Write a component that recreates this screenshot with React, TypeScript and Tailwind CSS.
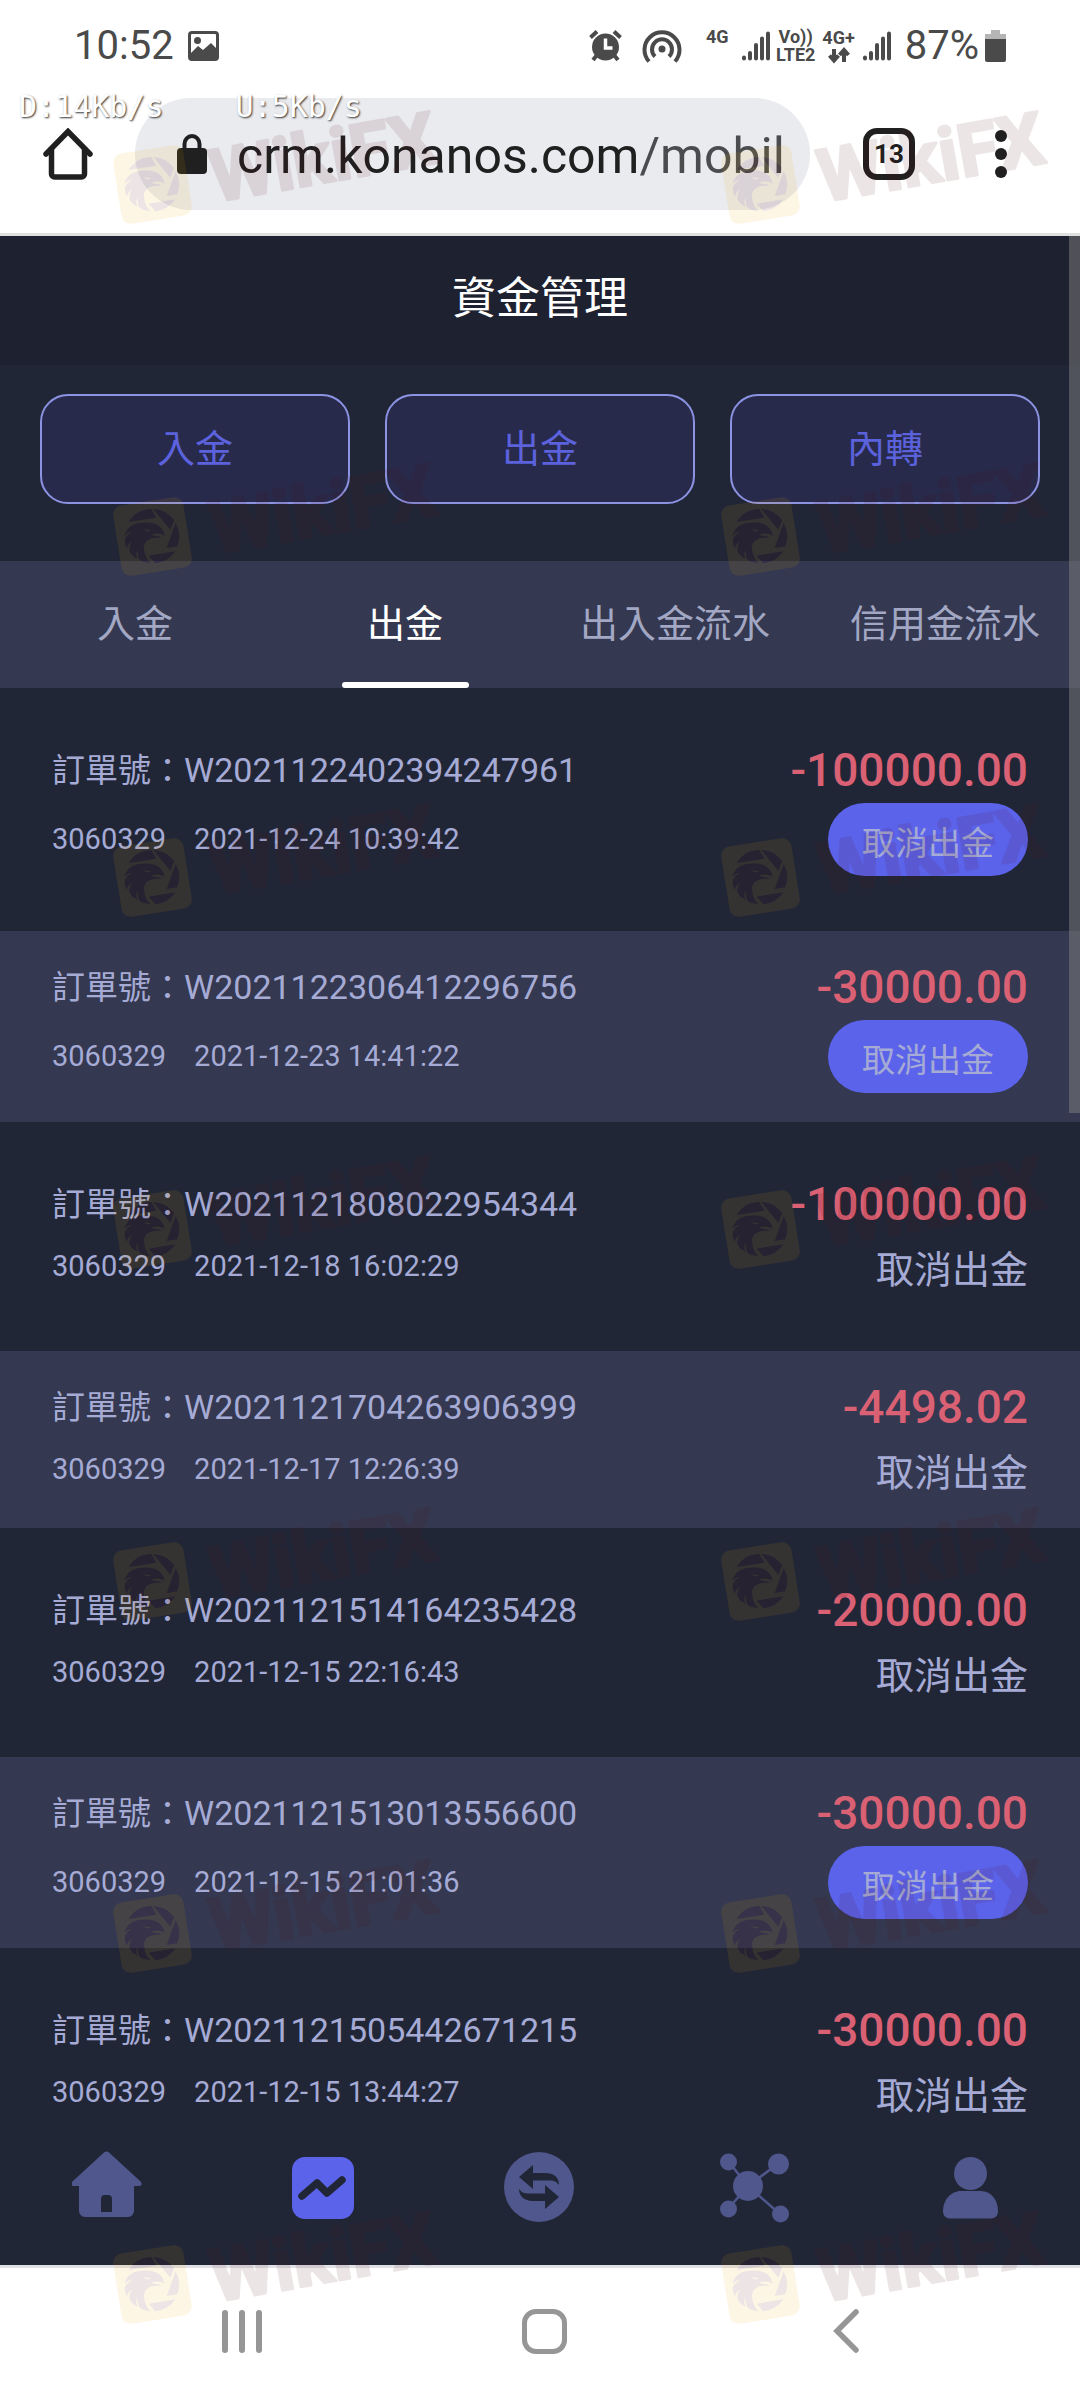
import React, { useState } from 'react';
import clsx from 'clsx';

interface Order {
  id: string;
  time: string;
  amount: string;
  cancelable: boolean;
}

const orders: Order[] = [
  { id: 'W2021122402394247961', time: '2021-12-24 10:39:42', amount: '-100000.00', cancelable: true },
  { id: 'W2021122306412296756', time: '2021-12-23 14:41:22', amount: '-30000.00', cancelable: true },
  { id: 'W2021121808022954344', time: '2021-12-18 16:02:29', amount: '-100000.00', cancelable: false },
  { id: 'W2021121704263906399', time: '2021-12-17 12:26:39', amount: '-4498.02', cancelable: false },
  { id: 'W2021121514164235428', time: '2021-12-15 22:16:43', amount: '-20000.00', cancelable: false },
  { id: 'W2021121513013556600', time: '2021-12-15 21:01:36', amount: '-30000.00', cancelable: true },
  { id: 'W2021121505442671215', time: '2021-12-15 13:44:27', amount: '-30000.00', cancelable: false },
];

const account = '3060329';
const actions = ['入金', '出金', '內轉'];
const tabs = ['入金', '出金', '出入金流水', '信用金流水'];

const SignalBars = ({ className }: { className?: string }) => (
  <svg viewBox="0 0 28 30" className={clsx('w-7 h-[30px]', className)} stroke="#4a4a4a" strokeWidth="4" strokeLinecap="round">
    <path d="M2 26.5v1M8 22v5.500M14 14v13.500M20 7.500v20M26 2.500v25" />
  </svg>
);

const StatusBar = () => (
  <div className="flex items-center h-[92px] px-[74px] text-[40px] leading-none text-[#4a4a4a]">
    <span>10:52</span>
    <svg viewBox="0 0 31 30" className="w-[31px] h-[30px] ml-[14px]">
      <rect x="1.500" y="1.500" width="28" height="27" rx="2.500" fill="none" stroke="#4a4a4a" strokeWidth="3" />
      <circle cx="9.500" cy="9.500" r="3.500" fill="#4a4a4a" />
      <path d="M2 23l8-8 5 4 8-7 6 6v10H2z" fill="#4a4a4a" />
    </svg>

    <div className="flex items-center ml-auto">
      <svg viewBox="0 0 33 32" className="w-[33px] h-8 mr-5">
        <path d="M1.500 7.500l6.500-6M31.500 7.500l-6.500-6" stroke="#4a4a4a" strokeWidth="4" />
        <path d="M8 25l-4 5M25 25l4 5" stroke="#4a4a4a" strokeWidth="4" />
        <circle cx="16.500" cy="17" r="13.500" fill="#4a4a4a" />
        <path d="M16.500 8.500v9.500h7" fill="none" stroke="#fff" strokeWidth="3.500" />
      </svg>
      <svg viewBox="0 0 40 34" className="w-10 h-[34px] mr-6" fill="none" stroke="#4a4a4a" strokeWidth="4">
        <path d="M7 32.500a17.500 17.500 0 1 1 26 0" />
        <path d="M13 27.500a10 10 0 1 1 14 0" />
        <circle cx="20" cy="20" r="3.500" fill="#4a4a4a" stroke="none" />
      </svg>
      <span className="w-[23px] h-9 mr-[13px] text-[18px] leading-[18px] font-bold">4G</span>
      <SignalBars className="mr-[6px]" />
      <span className="flex flex-col items-center mr-[7px] text-[18px] leading-[18px] font-bold">
        <span>Vo))</span>
        <span>LTE2</span>
      </span>
      <span className="mr-2 text-[18px] leading-[18px] font-bold text-center">
        4G+
        <svg viewBox="0 0 22 17" className="w-[22px] h-[17px] mx-auto" fill="none" stroke="#4a4a4a" strokeWidth="4">
          <path d="M6 2v11M1.500 8.500L6 13.500l4.500-5M16 15V4M11.500 8L16 3l4.500 5" />
        </svg>
      </span>
      <SignalBars className="mr-[14px]" />
      <span className="mr-[6px]">87%</span>
      <svg viewBox="0 0 21 32" className="w-[21px] h-8">
        <path d="M6 0h9v4h6v6H0V4h6z" fill="#b5b5b5" />
        <path d="M0 9h21v21a2 2 0 0 1-2 2H2a2 2 0 0 1-2-2z" fill="#4a4a4a" />
      </svg>
    </div>
  </div>
);

const BrowserHeader = () => (
  <header className="relative shrink-0 bg-white border-b-[3px] border-[#dfe0e0]">
    <StatusBar />
    <div className="flex items-center pt-[6px] pb-[23px] pl-[43px] pr-[73px]">
      <button aria-label="Home" className="shrink-0">
        <svg viewBox="0 0 50 52" className="w-[50px] h-[52px]" fill="none" stroke="#202020" strokeWidth="5.500" strokeLinecap="round">
          <path d="M3 26L25 3.500 47 26" />
          <path d="M8.500 22v24a3 3 0 0 0 3 3h27a3 3 0 0 0 3-3V22" />
        </svg>
      </button>
      <button className="flex items-center flex-1 min-w-0 h-28 ml-[42px] mr-[53px] pl-[42px] pr-5 rounded-full overflow-hidden bg-[#eaebef] text-[50px] whitespace-nowrap">
        <svg viewBox="0 0 30 40" className="shrink-0 w-[30px] h-10 mr-[30px]">
          <path d="M7.500 16V10a7.500 8 0 0 1 15 0v6" fill="none" stroke="#202020" strokeWidth="4" />
          <rect y="14" width="30" height="26" rx="4" fill="#202020" />
        </svg>
        <span className="pt-1 text-[#202020]">
          crm.konanos.com<span className="text-[#4a4c4e]">/mobil</span>
        </span>
      </button>
      <button className="shrink-0 w-[52px] h-[52px] rounded-[14px] border-6 border-[#202020] text-[26px] leading-none font-bold text-[#202020]">
        13
      </button>
      <button aria-label="Menu" className="shrink-0 flex flex-col gap-[6px] ml-20">
        <span className="size-3 rounded-full bg-[#202020]" />
        <span className="size-3 rounded-full bg-[#202020]" />
        <span className="size-3 rounded-full bg-[#202020]" />
      </button>
    </div>
    {/* network speed overlay */}
    <div className="absolute left-[19px] top-[90px] flex gap-[72px] font-['DejaVu_Sans_Mono',monospace] text-[30px] leading-[34px] text-white [text-shadow:1px_1px_2px_#333]">
      <span>D:14Kb/s</span>
      <span>U:5Kb/s</span>
    </div>
  </header>
);

const OrderRow = ({ order, striped }: { order: Order; striped: boolean }) => (
  <li
    className={clsx(
      'flex flex-col gap-[6px] py-[29px] px-[52px] text-[#a5abd5]',
      striped ? 'bg-[#343850]' : 'my-[26px]'
    )}
  >
    <div className="flex items-center justify-between h-[54px] leading-[54px]">
      <p className="text-[34px]">
        <span className="text-[33px]">訂單號：</span>
        {order.id}
      </p>
      <strong className="text-[46px] font-medium text-[#da6073]">{order.amount}</strong>
    </div>
    <div className={clsx('flex items-center justify-between', order.cancelable ? 'h-[73px]' : 'h-[59px]')}>
      <p className="flex gap-7 text-[29px]">
        <span>{account}</span>
        <time>{order.time}</time>
      </p>
      {order.cancelable ? (
        <button className="w-[200px] h-[73px] pt-2 rounded-full bg-[#5b63ea] text-[33px]">取消出金</button>
      ) : (
        <span className="pt-2 text-[38px]">取消出金</span>
      )}
    </div>
  </li>
);

const navItems = [
  {
    label: 'Home',
    icon: (
      <path d="M32 1.500a4 4 0 0 1 5 0L68 30c3 3 1.500 5-1 5h-5v25a6 6 0 0 1-6 6H13a6 6 0 0 1-6-6V35H2c-2.500 0-4-2-1-5zM29 61h11V48a4 4 0 0 0-4-4h-3a4 4 0 0 0-4 4z" fillRule="evenodd" />
    ),
  },
  {
    label: 'Funds',
    icon: (
      <>
        <rect x="4" y="6" width="62" height="62" rx="13" fill="#5b63ea" />
        <path d="M14 45l15-13 10 10 15-13" fill="none" stroke="#212637" strokeWidth="7.500" strokeLinecap="round" strokeLinejoin="round" />
      </>
    ),
  },
  {
    label: 'Transfer',
    icon: (
      <>
        <circle cx="35" cy="36" r="35" />
        <g fill="#212637">
          <path d="M15 26l14-12v8h12c9 0 14 4 14 12-3-4-6-4.500-10-4.500H29V38z" />
          <path d="M55 46L41 58v-8H29c-9 0-14-5-14-12 3 4 6 4.500 10 4.500h16V34z" />
        </g>
      </>
    ),
  },
  {
    label: 'Network',
    icon: (
      <>
        <path d="M8 10l20 25L8 58M28 35L59 12M28 35l33 29" fill="none" stroke="#4f578c" strokeWidth="2.500" />
        <circle cx="28" cy="35" r="15" />
        <circle cx="8.500" cy="11" r="8.500" />
        <circle cx="58.500" cy="13" r="10.500" />
        <circle cx="8.500" cy="58" r="8.500" />
        <circle cx="60.500" cy="63" r="8.500" />
      </>
    ),
  },
  {
    label: 'Profile',
    icon: (
      <>
        <circle cx="34.500" cy="22.500" r="16.500" />
        <path d="M25 40h20c10 0 17 9 17 20 0 6-4 7.500-8 7.500H15c-4 0-8-1.500-8-7.500 0-11 8-20 18-20z" />
      </>
    ),
  },
];

const BottomNav = () => (
  <nav className="shrink-0 grid grid-cols-5 justify-items-center items-start h-[131px] pt-[17px]">
    {navItems.map((item) => (
      <button key={item.label} aria-label={item.label}>
        <svg viewBox="0 0 72 72" className="w-[72px] h-[72px]" fill="#4f578c">
          {item.icon}
        </svg>
      </button>
    ))}
  </nav>
);

const SystemBar = () => (
  <footer className="shrink-0 grid grid-cols-3 justify-items-center items-center h-[135px] pl-[91px] pr-[83px] pb-[6px] bg-white border-t-[3px] border-[#e1e1e5]">
    <button aria-label="Recents" className="flex gap-[11px]">
      <span className="w-[6px] h-[43px] rounded-full bg-[#969696]" />
      <span className="w-[6px] h-[43px] rounded-full bg-[#969696]" />
      <span className="w-[6px] h-[43px] rounded-full bg-[#969696]" />
    </button>
    <button aria-label="Home" className="w-[45px] h-[45px] rounded-[14px] border-[5px] border-[#969696]" />
    <button aria-label="Back">
      <svg viewBox="0 0 26 44" className="w-[26px] h-11" fill="none" stroke="#969696" strokeWidth="5.500" strokeLinecap="round">
        <path d="M23 3L4 22l19 19" />
      </svg>
    </button>
  </footer>
);

const stampRows = [144, 496, 837, 1189, 1541, 1893, 2244];
const stampCols = [112, 720];

const Watermark = () => (
  <svg className="absolute inset-0 w-full h-full pointer-events-none" aria-hidden="true">
    {stampRows.map((y) =>
      stampCols.map((x) => (
        <g key={`${x}-${y}`} transform={`translate(${x} ${y})`}>
          <mask id={`m-${x}-${y}`} maskUnits="userSpaceOnUse" x="0" y="0" width="90" height="90">
            <rect width="90" height="90" fill="#fff" />
            <Eagle fill="#000" />
          </mask>
          <g mask={`url(#m-${x}-${y})`}>
            <rect x="5" y="5" width="71" height="71" rx="9" transform="rotate(-9 40.500 40.500)" fill="#eba800" opacity="0.1" />
          </g>
          <g opacity="0.1">
            <Eagle fill="#520510" />
            <text
              transform="translate(103 58) rotate(-10)"
              className="text-[73px] font-bold"
              fill="#520a10"
              stroke="#520a10"
              strokeWidth="3"
              strokeLinejoin="round"
            >
              WikiFX
            </text>
          </g>
        </g>
      ))
    )}
  </svg>
);

const Eagle = ({ fill }: { fill: string }) => (
  <g transform="scale(0.3333)" fill={fill}>
    <path d="M50 78A82 82 0 0 1 118 39L133 65z" />
    <path d="M124 39A82 82 0 0 1 186 72L175 101z" />
    <path d="M191 82A82 82 0 0 1 196 151L164 156z" />
    <path d="M110 179L190 166A82 82 0 0 1 130 202z" />
    <path d="M38 120C42 96 62 80 92 80C128 76 156 92 157 120C148 110 134 111 118 115L126 119C138 119 146 122 150 126C120 122 98 132 96 152C95 172 104 190 116 202C100 200 86 196 82 190C76 180 78 170 76 162C72 170 72 178 76 188C64 182 56 174 52 164C52 152 56 144 60 136C50 144 46 150 45 158C38 146 37 134 40 126C48 116 54 110 62 106C52 108 44 112 38 120zM96 98C100 108 112 108 118 101C110 103 104 100 96 98z" fillRule="evenodd" />
  </g>
);

const App: React.FC = () => {
  const [activeTab, setActiveTab] = useState(1);

  return (
    <div className="relative flex flex-col h-screen overflow-hidden bg-[#212637] font-[Roboto,'Noto_Sans_CJK_TC',sans-serif]">
      <BrowserHeader />

      <div className="relative flex flex-col flex-1 min-h-0">
        <h1 className="shrink-0 h-[129px] leading-[127px] bg-[#1e2130] text-center text-[44px] text-white">資金管理</h1>

        <div className="shrink-0 grid grid-cols-3 gap-[35px] px-10 pt-[29px] pb-[57px]">
          {actions.map((name) => (
            <button key={name} className="h-[110px] rounded-[28px] border-2 border-[#8c93e3] bg-[#282a4c] text-[38px] text-[#5b62dc]">
              {name}
            </button>
          ))}
        </div>

        <div role="tablist" className="shrink-0 grid grid-cols-4 bg-[#343850]">
          {tabs.map((name, idx) => (
            <button
              key={name}
              role="tab"
              aria-selected={idx === activeTab}
              onClick={() => setActiveTab(idx)}
              className={clsx(
                'flex flex-col items-center text-[38px] whitespace-nowrap',
                idx === activeTab ? 'text-white' : 'text-[#a2a7c4]'
              )}
            >
              <span className="h-[121px] leading-[127px]">{name}</span>
              <span className={clsx('w-[127px] h-[6px] rounded-full', idx === activeTab && 'bg-white')} />
            </button>
          ))}
        </div>

        <ul className="flex-1 min-h-0 overflow-y-auto [scrollbar-width:none]">
          {orders.map((order, idx) => (
            <OrderRow key={order.id} order={order} striped={idx % 2 === 1} />
          ))}
        </ul>

        <BottomNav />

        {/* scroll thumb */}
        <div className="absolute right-0 top-0 w-[11px] h-[877px] bg-[#808080]/50" />
      </div>

      <SystemBar />
      <Watermark />
    </div>
  );
};

export default App;
